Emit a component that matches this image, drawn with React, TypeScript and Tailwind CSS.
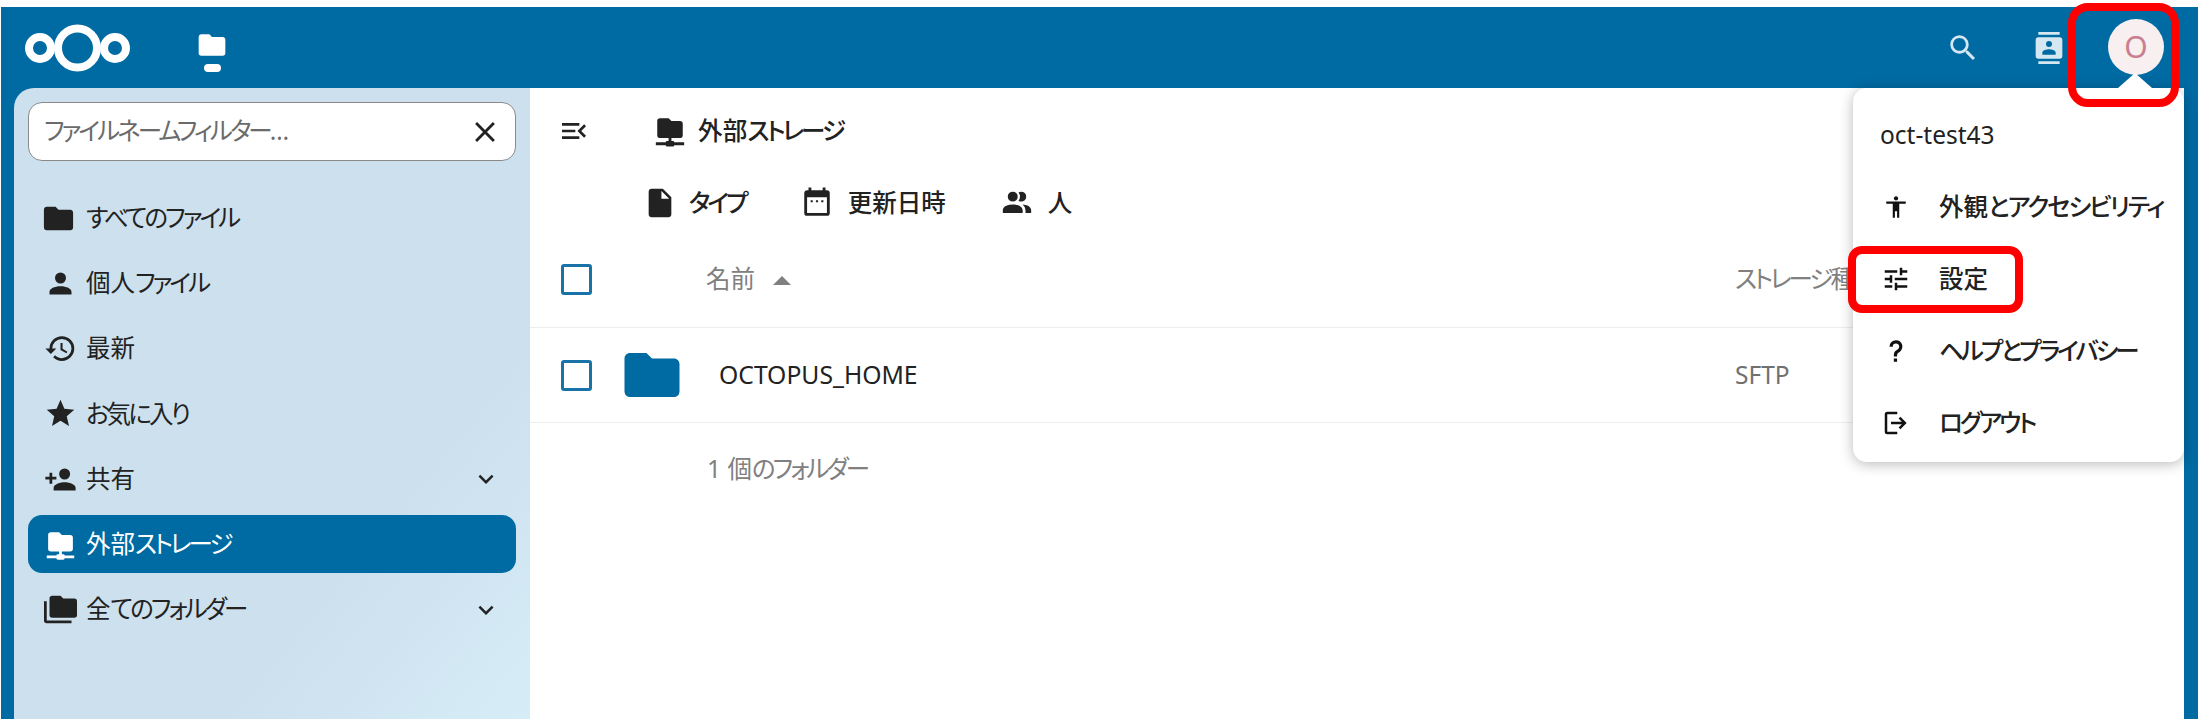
import React from "react";

const P = {
  folder: "M10,4H4C2.89,4 2,4.89 2,6V18A2,2 0 0,0 4,20H20A2,2 0 0,0 22,18V8C22,6.89 21.1,6 20,6H12L10,4Z",
  account: "M12,4A4,4 0 0,1 16,8A4,4 0 0,1 12,12A4,4 0 0,1 8,8A4,4 0 0,1 12,4M12,14C16.42,14 20,15.79 20,18V20H4V18C4,15.79 7.58,14 12,14Z",
  history: "M13.5,8H12V13L16.28,15.54L17,14.33L13.5,12.25V8M13,3A9,9 0 0,0 4,12H1L4.96,16.03L9,12H6A7,7 0 0,1 13,5A7,7 0 0,1 20,12A7,7 0 0,1 13,19C11.07,19 9.32,18.21 8.06,16.94L6.64,18.36C8.27,20 10.5,21 13,21A9,9 0 0,0 22,12A9,9 0 0,0 13,3",
  star: "M12,17.27L18.18,21L16.54,13.97L22,9.24L14.81,8.62L12,2L9.19,8.62L2,9.24L7.45,13.97L5.82,21L12,17.27Z",
  accountPlus: "M15,14C12.33,14 7,15.33 7,18V20H23V18C23,15.33 17.67,14 15,14M6,10V7H4V10H1V12H4V15H6V12H9V10M15,12A4,4 0 0,0 19,8A4,4 0 0,0 15,4A4,4 0 0,0 11,8A4,4 0 0,0 15,12Z",
  folderNetwork: "M3,15V5A2,2 0 0,1 5,3H11L13,5H19A2,2 0 0,1 21,7V15A2,2 0 0,1 19,17H13V19H14A1,1 0 0,1 15,20H22V22H15A1,1 0 0,1 14,23H10A1,1 0 0,1 9,22H2V20H9A1,1 0 0,1 10,19H11V17H5A2,2 0 0,1 3,15Z",
  folderMultiple: "M22,4H14L12,2H6A2,2 0 0,0 4,4V16A2,2 0 0,0 6,18H22A2,2 0 0,0 24,16V6A2,2 0 0,0 22,4M2,6H0V20A2,2 0 0,0 2,22H20V20H2V6Z",
  file: "M13,9V3.5L18.5,9M6,2C4.89,2 4,2.89 4,4V20A2,2 0 0,0 6,22H18A2,2 0 0,0 20,20V8L14,2H6Z",
  calendar: "M19,3H18V1H16V3H8V1H6V3H5C3.89,3 3,3.9 3,5V19A2,2 0 0,0 5,21H19A2,2 0 0,0 21,19V5A2,2 0 0,0 19,3M19,19H5V8H19V19M7.5,10H9V11.5H7.5V10M11.25,10H12.75V11.5H11.25V10M15,10H16.5V11.5H15V10Z",
  people: "M16 17V19H2V17S2 13 9 13 16 17 16 17M12.5 7.5A3.5 3.5 0 1 0 9 11A3.5 3.5 0 0 0 12.5 7.5M15.94 13A5.32 5.32 0 0 1 18 17V19H22V17S22 13.37 15.94 13M15 4A3.39 3.39 0 0 0 13.07 4.59A5 5 0 0 1 13.07 10.41A3.39 3.39 0 0 0 15 11A3.5 3.5 0 0 0 15 4Z",
  menuOpen: "M21,15.61L19.59,17L14.58,12L19.59,7L21,8.39L17.44,12L21,15.61M3,6H16V8H3V6M3,13V11H13V13H3M3,18V16H16V18H3Z",
  magnify: "M9.5,3A6.5,6.5 0 0,1 16,9.5C16,11.11 15.41,12.59 14.44,13.73L14.71,14H15.5L20.5,19L19,20.5L14,15.5V14.71L13.73,14.44C12.59,15.41 11.11,16 9.5,16A6.5,6.5 0 0,1 3,9.5A6.5,6.5 0 0,1 9.5,3M9.5,5C7,5 5,7 5,9.5C5,12 7,14 9.5,14C12,14 14,12 14,9.5C14,7 12,5 9.5,5Z",
  contacts: "M20,0H4V2H20V0M4,24H20V22H4V24M20,4H4A2,2 0 0,0 2,6V18A2,2 0 0,0 4,20H20A2,2 0 0,0 22,18V6A2,2 0 0,0 20,4M12,6.75A2.25,2.25 0 0,1 14.25,9A2.25,2.25 0 0,1 12,11.25A2.25,2.25 0 0,1 9.75,9A2.25,2.25 0 0,1 12,6.75M17,17H7V15.5C7,13.83 10.33,13 12,13C13.67,13 17,13.83 17,15.5V17Z",
  close: "M19,6.41L17.59,5L12,10.59L6.41,5L5,6.41L10.59,12L5,17.59L6.41,19L12,13.41L17.59,19L19,17.59L13.41,12L19,6.41Z",
  chevron: "M7.41,8.58L12,13.17L16.59,8.58L18,10L12,16L6,10L7.41,8.58Z",
  human: "M21,9H15V22H13V16H11V22H9V9H3V7H21M12,2A2,2 0 0,1 14,4A2,2 0 0,1 12,6C10.89,6 10,5.1 10,4C10,2.89 10.89,2 12,2Z",
  tune: "M3,17V19H9V17H3M3,5V7H13V5H3M13,21V19H21V17H13V15H11V21H13M7,9V11H3V13H7V15H9V9H7M21,13V11H11V13H21M15,9H17V7H21V5H17V3H15V9Z",
  help: "M10,19H13V22H10V19M12,2C17.35,2.22 19.68,7.62 16.5,11.67C15.67,12.67 14.33,13.33 13.67,14.17C13,15 13,16 13,17H10C10,15.33 10,13.92 10.67,12.92C11.33,11.92 12.67,11.33 13.5,10.67C15.92,8.43 15.32,5.26 12,5A3,3 0 0,0 9,8H6A6,6 0 0,1 12,2Z",
  logout: "M5,3H13V5H5V19H13V21H5A2,2 0 0,1 3,19V5A2,2 0 0,1 5,3M15.5,7L20.5,12L15.5,17L14.08,15.59L16.67,13H8V11H16.67L14.08,8.41L15.5,7Z",
};

function Icon({ d, className }: { d: string; className?: string }) {
  return (
    <svg viewBox="0 0 24 24" fill="currentColor" className={className}>
      <path d={d} />
    </svg>
  );
}

/* Kana runs in the reference use a narrower face: tighten them. */
function K({ children }: { children: React.ReactNode }) {
  return <span className="tracking-[-2.9px]">{children}</span>;
}

function NavItem({ icon, label, chevron, active, iconClass }: { icon: string; label: React.ReactNode; chevron?: boolean; active?: boolean; iconClass?: string }) {
  return (
    <div className={`flex items-center h-[58px] mb-[7.3px] rounded-[14px] pl-[14px] pr-[14px] ${active ? "bg-[#006aa3] text-white" : "text-[#222222]"}`}>
      <span className="w-[36px] flex justify-center">
        <Icon d={icon} className={iconClass ?? "w-[33px] h-[33px]"} />
      </span>
      <span className="ml-[8px] flex-1 text-[24.5px] whitespace-nowrap">{label}</span>
      {chevron && <Icon d={P.chevron} className="w-[30px] h-[30px] mr-[1px]" />}
    </div>
  );
}

function FilterChip({ icon, label, gap }: { icon: string; label: React.ReactNode; gap: string }) {
  return (
    <div className="flex items-center">
      <Icon d={icon} className="w-[34px] h-[34px] text-[#222222]" />
      <span className={`${gap} text-[24.5px] font-medium text-[#222222] whitespace-nowrap`}>{label}</span>
    </div>
  );
}

function MenuItem({ icon, label, iconClass }: { icon: string; label: React.ReactNode; iconClass?: string }) {
  return (
    <div className="flex items-center h-[72px] pl-[28px]">
      <span className="w-[30px] flex justify-center">
        <Icon d={icon} className={`${iconClass ?? "w-[30px] h-[30px]"} text-[#111111]`} />
      </span>
      <span className="ml-[28px] text-[24.5px] font-medium text-[#222222] whitespace-nowrap">{label}</span>
    </div>
  );
}

function CheckBox() {
  return <span className="block w-[31px] h-[31px] rounded-[3px] border-[3px] border-[#1a73a8]" />;
}

export default function App() {
  return (
    <div className="relative w-[2200px] h-[724px] overflow-hidden bg-white pt-[7px] pl-[1px] pr-[2px] pb-[5px] [font-family:'Noto_Sans','Noto_Sans_CJK_JP',sans-serif] [font-feature-settings:'palt']">
      <div className="flex flex-col h-full bg-[#006aa3]">
        <header className="flex items-center h-[81px] shrink-0 text-white">
          <svg viewBox="0 0 105 48" className="w-[105px] h-[48px] ml-[24px]" fill="none" stroke="white">
            <circle cx="15" cy="24" r="11" strokeWidth="8" />
            <circle cx="52.5" cy="24" r="19.5" strokeWidth="8" />
            <circle cx="90" cy="24" r="11" strokeWidth="8" />
          </svg>
          <div className="ml-[66px] flex flex-col items-center mt-[6px]">
            <Icon d={P.folder} className="w-[32px] h-[32px]" />
            <span className="block w-[17px] h-[8px] rounded-full bg-white mt-[3px]" />
          </div>
          <div className="ml-auto flex items-center text-[#d5e8f2]">
            <Icon d={P.magnify} className="w-[34px] h-[34px]" />
            <Icon d={P.contacts} className="w-[32px] h-[34px] ml-[53px]" />
            <div className="ml-[43px] mr-[34px] w-[56px] h-[56px] rounded-full bg-[#f7eff0] flex items-center justify-center text-[30px] text-[#c97f90] -mt-[2px]">O</div>
          </div>
        </header>
        <div className="flex flex-1 min-h-0 pl-[13px] pr-[14px]">
          <aside className="w-[516px] shrink-0 rounded-tl-[20px] bg-gradient-to-br from-[#cce0ed] from-70% to-[#d6edf7] pt-[14px] px-[14px]">
            <div className="flex items-center h-[59px] rounded-[14px] bg-white border border-[#8a8a8a] pl-[15px] pr-[13px]">
              <span className="flex-1 text-[24.5px] text-[#6b6b6b] whitespace-nowrap"><K>ファイルネームフィルター…</K></span>
              <Icon d={P.close} className="w-[34px] h-[34px] text-[#222222]" />
            </div>
            <nav className="mt-[28px]">
              <NavItem icon={P.folder} label={<K>すべてのファイル</K>} iconClass="w-[35px] h-[35px] -ml-[3px]" />
              <NavItem icon={P.account} label={<>個人<K>ファイル</K></>} />
              <NavItem icon={P.history} label="最新" />
              <NavItem icon={P.star} label={<K>お気に入り</K>} />
              <NavItem icon={P.accountPlus} label="共有" chevron />
              <NavItem icon={P.folderNetwork} label={<>外部<K>ストレージ</K></>} active />
              <NavItem icon={P.folderMultiple} label={<>全<K>てのフォルダー</K></>} chevron />
            </nav>
          </aside>
          <main className="flex-1 bg-white min-w-0">
            <div className="flex items-center h-[86px] pl-[28px]">
              <Icon d={P.menuOpen} className="w-[32px] h-[32px] text-[#222222]" />
              <Icon d={P.folderNetwork} className="ml-[63px] w-[34px] h-[34px] text-[#222222]" />
              <span className="ml-[11px] text-[24.5px] font-medium text-[#222222] whitespace-nowrap tracking-[0.2px]">外部<K>ストレージ</K></span>
            </div>
            <div className="flex items-center h-[58px] pl-[113px] gap-[54px]">
              <FilterChip icon={P.file} label={<K>タイプ</K>} gap="ml-[12px]" />
              <FilterChip icon={P.calendar} label="更新日時" gap="ml-[14px]" />
              <FilterChip icon={P.people} label="人" gap="ml-[14px]" />
            </div>
            <div className="flex items-center h-[96px] pl-[31px] border-b border-[#eeeeee]">
              <CheckBox />
              <span className="ml-[114px] text-[24.5px] text-[#808080] whitespace-nowrap">名前</span>
              <span className="ml-[18px] mt-[2px] w-0 h-0 border-x-[9px] border-x-transparent border-b-[9px] border-b-[#808080]" />
              <span className="ml-auto w-[449px] text-[24.5px] text-[#808080] whitespace-nowrap"><K>ストレージ</K>種類</span>
            </div>
            <div className="flex items-center h-[95px] pl-[31px] border-b border-[#eeeeee]">
              <CheckBox />
              <Icon d={P.folder} className="ml-[27px] w-[66px] h-[66px] text-[#006aa3]" />
              <span className="ml-[34px] text-[24.7px] text-[#222222]">OCTOPUS_HOME</span>
              <span className="ml-auto w-[449px] text-[24.5px] text-[#707070]">SFTP</span>
            </div>
            <div className="flex items-center h-[92px] pl-[177px] text-[24.5px] text-[#808080] whitespace-nowrap">1 個<K>のフォルダー</K></div>
          </main>
        </div>
      </div>

      {/* user menu popover */}
      <div className="absolute top-[88px] left-[1853px] w-[331px] h-[374px] rounded-[14px] bg-white shadow-[0_2px_14px_rgba(0,0,0,0.28)] pt-[11px]">
        <span className="absolute -top-[15px] left-[265px] w-0 h-0 border-x-[17px] border-x-transparent border-b-[15px] border-b-white" />
        <div className="flex items-center h-[72px] pl-[27px] text-[24.5px] text-[#222222]">oct-test43</div>
        <MenuItem icon={P.human} iconClass="w-[26px] h-[26px]" label={<>外観<span className="tracking-[-2px]">とアクセシビリティ</span></>} />
        <MenuItem icon={P.tune} label="設定" />
        <MenuItem icon={P.help} iconClass="w-[26px] h-[26px]" label={<K>ヘルプとプライバシー</K>} />
        <MenuItem icon={P.logout} label={<K>ログアウト</K>} />
      </div>

      {/* red annotation frames */}
      <div className="absolute left-[2068px] top-[3px] w-[111px] h-[104px] rounded-[20px] border-[8px] border-[#ff0000]" />
      <div className="absolute left-[1848px] top-[246px] w-[175px] h-[67px] rounded-[14px] border-[8px] border-[#ff0000]" />
    </div>
  );
}
